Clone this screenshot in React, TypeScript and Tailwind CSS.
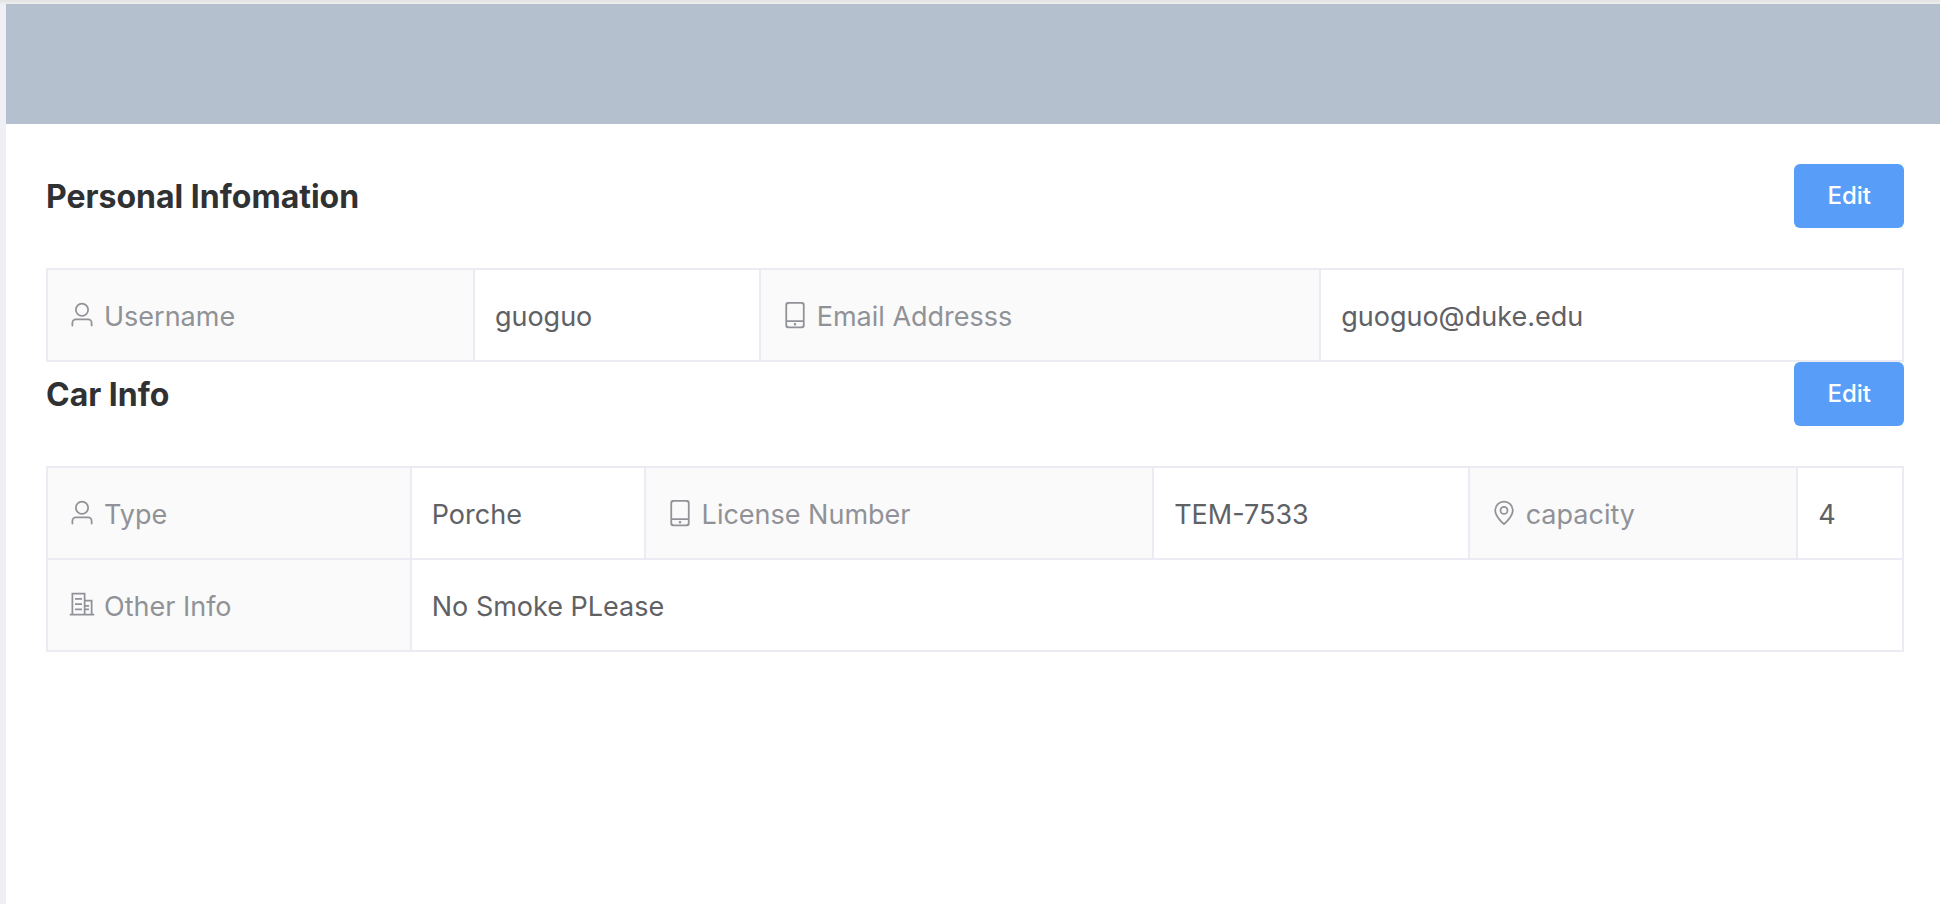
import type { ReactNode } from "react";

const iconPaths = {
  user: "M512 512a192 192 0 1 0 0-384 192 192 0 0 0 0 384zm0 64a256 256 0 1 1 0-512 256 256 0 0 1 0 512zm320 320v-96a96 96 0 0 0-96-96H288a96 96 0 0 0-96 96v96a32 32 0 1 1-64 0v-96a160 160 0 0 1 160-160h448a160 160 0 0 1 160 160v96a32 32 0 1 1-64 0z",
  phone:
    "M224 768v96a64 64 0 0 0 64 64h448a64 64 0 0 0 64-64V768H224zm0-64h576V160a64 64 0 0 0-64-64H288a64 64 0 0 0-64 64v544zm32 288a96 96 0 0 1-96-96V128a96 96 0 0 1 96-96h512a96 96 0 0 1 96 96v768a96 96 0 0 1-96 96H256zm304-144a48 48 0 1 1-96 0 48 48 0 0 1 96 0z",
  pin: "M800 416a288 288 0 1 0-576 0c0 118.144 94.528 272.128 288 456.576C705.472 688.128 800 534.144 800 416zM512 960C277.312 746.688 160 565.312 160 416a352 352 0 0 1 704 0c0 149.312-117.312 330.688-352 544zM512 512a96 96 0 1 0 0-192 96 96 0 0 0 0 192zm0 64a160 160 0 1 1 0-320 160 160 0 0 1 0 320z",
  building:
    "M128 64H640V832H576V128H192V832H128zM256 256h256v64H256zM256 448h256v64H256zM256 640h256v64H256zM640 512h128v64H640zM640 640h128v64H640zM640 320H896V832H832V384H640zM64 832h896v64H64z",
};

type IconName = keyof typeof iconPaths;

function Icon({ name }: { name: IconName }) {
  return (
    <svg viewBox="0 0 1024 1024" className="size-7 shrink-0" fill="currentColor" fillRule="evenodd" aria-hidden="true">
      <path d={iconPaths[name]} />
    </svg>
  );
}

function Label({ icon, children }: { icon: IconName; children: ReactNode }) {
  return (
    <th scope="row" className="border-2 border-[#ebecf3] bg-[#fafafa] px-5 py-6 text-left font-normal text-[#909297]">
      <span className="flex items-center gap-2">
        <Icon name={icon} />
        <span className="pt-1">{children}</span>
      </span>
    </th>
  );
}

function Value({ colSpan, children }: { colSpan?: number; children: ReactNode }) {
  return (
    <td colSpan={colSpan} className="border-2 border-[#ebecf3] px-5 py-6 text-[#606165]">
      <span className="block pt-1">{children}</span>
    </td>
  );
}

function Section({ title, columns, children }: { title: string; columns: string[]; children: ReactNode }) {
  return (
    <section>
      <div className="mb-10 flex items-center justify-between">
        <h2 className="pt-0.5 text-[32px] leading-10 font-bold text-[#303133]">{title}</h2>
        <button
          type="button"
          aria-label={`Edit ${title}`}
          className="h-16 rounded-md bg-[#589ef8] px-[33px] text-2xl font-medium text-white"
        >
          Edit
        </button>
      </div>
      <table className="w-full table-fixed border-collapse text-[27px] leading-[38px]">
        <colgroup>
          {columns.map((width, i) => (
            <col key={i} className={width} />
          ))}
        </colgroup>
        <tbody>{children}</tbody>
      </table>
    </section>
  );
}

export default function App() {
  return (
    <div className="flex min-h-screen flex-col bg-[#eef0f6] font-['Inter',sans-serif]">
      <div className="h-1 border-t-2 border-[#e4e5e2] bg-[#ebebeb]" />
      <div className="flex grow flex-col pl-1.5">
        <header className="h-30 bg-[#b4c0ce]" />
        <main className="grow bg-white py-10 pr-9 pl-10">
          <Section title="Personal Infomation" columns={["w-[23%]", "w-[15.4%]", "w-[30.2%]", "w-[31.4%]"]}>
            <tr>
              <Label icon="user">Username</Label>
              <Value>guoguo</Value>
              <Label icon="phone">Email Addresss</Label>
              <Value>guoguo@duke.edu</Value>
            </tr>
          </Section>
          <Section
            title="Car Info"
            columns={["w-[19.6%]", "w-[12.6%]", "w-[27.4%]", "w-[17%]", "w-[17.7%]", "w-[5.7%]"]}
          >
            <tr>
              <Label icon="user">Type</Label>
              <Value>Porche</Value>
              <Label icon="phone">License Number</Label>
              <Value>TEM-7533</Value>
              <Label icon="pin">capacity</Label>
              <Value>4</Value>
            </tr>
            <tr>
              <Label icon="building">Other Info</Label>
              <Value colSpan={5}>No Smoke PLease</Value>
            </tr>
          </Section>
        </main>
      </div>
    </div>
  );
}
